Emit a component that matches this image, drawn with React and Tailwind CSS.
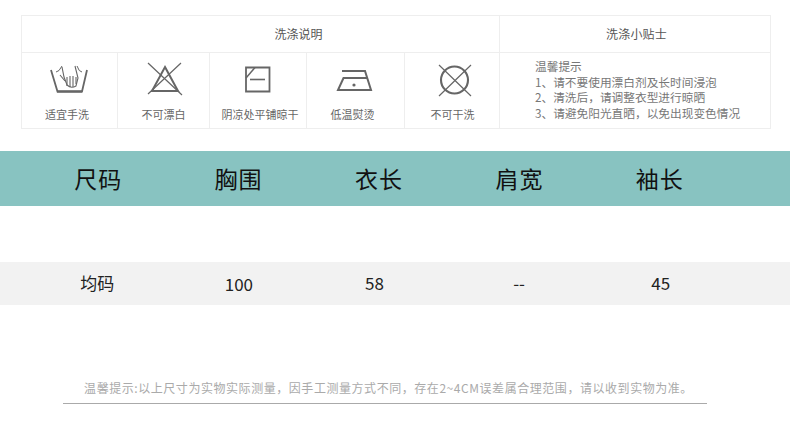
const cols = ['尺码', '胸围', '衣长', '肩宽', '袖长'];
const vals = [
  { text: '均码', cls: 'pb-[2px]' },
  { text: '100', cls: 'pl-[2px]' },
  { text: '58', cls: 'pr-[8px] pb-[2px]' },
  { text: '--', cls: 'pb-[2px]' },
  { text: '45', cls: 'pl-[2px] pb-[2px]' },
];

// svg coordinates below are page pixels, so they read straight off the screenshot
function HandWash() {
  return (
    <svg width="41" height="36" viewBox="49 62 41 36" fill="none" stroke="#666">
      <path d="M51 70 L57.5 91.5 H82 L87 70" strokeWidth="1.8" />
      <path d="M57 91.5 H82" strokeWidth="2.2" />
      <path d="M56 72 Q59 72 62 66 M82 72 Q79 72 77 66" strokeWidth="1" />
      <path d="M62 67 L64 77 L67 85 Q71 89 76 86 L78 78 L75 66" strokeWidth="1.1" />
      <path d="M67 77 V86 M70 76 V87 M73 76 V87 M76 77 V84 M60 75 L65 81" strokeWidth="1.1" />
    </svg>
  );
}

function NoBleach() {
  return (
    <svg width="39" height="36" viewBox="144 62 39 36" fill="none" stroke="#666">
      <path d="M165 67 L178 91 H152 Z" strokeWidth="2" />
      <path d="M148 63 L182 95 M181 63 L148 94" strokeWidth="1.2" />
    </svg>
  );
}

function ShadeDry() {
  return (
    <svg width="30" height="36" viewBox="243 62 30 36" fill="none" stroke="#666">
      <path d="M246 67.5 H269.5 V91.5 H246 Z" strokeWidth="1.8" />
      <path d="M246 78 L255 67.5" strokeWidth="1.5" />
      <path d="M250 79.5 H265" strokeWidth="1.6" />
    </svg>
  );
}

function LowIron() {
  return (
    <svg width="41" height="36" viewBox="335 62 41 36" fill="none" stroke="#666">
      <path d="M342 71 H365 L371 90 H338 L343.5 78 H367" strokeWidth="2" />
      <circle cx="354" cy="85" r="1.6" fill="#666" stroke="none" />
    </svg>
  );
}

function NoDryClean() {
  return (
    <svg width="46" height="36" viewBox="429 62 46 36" fill="none" stroke="#666">
      <circle cx="454.5" cy="80" r="13.5" strokeWidth="2.1" />
      <path d="M439 65 L471 96 M471 65 L439 96" strokeWidth="1.2" />
    </svg>
  );
}

const care = [
  { label: '适宜手洗', w: 'w-[96px]', shift: 'pr-[5px]', Icon: HandWash },
  { label: '不可漂白', w: 'w-[92px]', shift: '', Icon: NoBleach },
  { label: '阴凉处平铺晾干', w: 'w-[97px]', shift: 'pl-[4px]', Icon: ShadeDry },
  { label: '低温熨烫', w: 'w-[98px]', shift: 'pr-[6px]', Icon: LowIron },
  { label: '不可干洗', w: 'w-[94px]', shift: 'pl-[1px]', Icon: NoDryClean },
];

export default function App() {
  return (
    <div className="w-[790px] h-[426px] bg-white overflow-hidden font-['Noto_Sans_CJK_SC','Liberation_Sans',sans-serif]">
      <div className="pt-[15px] pl-[21px]">
        <div className="w-[750px] h-[114px] border border-[#eeeeee] flex text-[#666]">
          <div className="w-[478px] border-r border-[#eeeeee] flex flex-col">
            <div className="h-[37px] pl-[76px] border-b border-[#eeeeee] flex items-center justify-center text-[12px] text-[#555]">洗涤说明</div>
            <div className="flex flex-1">
              {care.map(({ label, w, shift, Icon }, i) => (
                <div key={label} className={`${w} ${i < 4 ? 'border-r border-[#eeeeee]' : ''} flex flex-col items-center`}>
                  <div className="h-[53px] flex items-center justify-center">
                    <Icon />
                  </div>
                  <div className={`${shift} text-[11px] leading-[16px] text-[#666]`}>{label}</div>
                </div>
              ))}
            </div>
          </div>
          <div className="flex-1 flex flex-col">
            <div className="h-[37px] pl-[3px] border-b border-[#eeeeee] flex items-center justify-center text-[12px] tracking-[0.2px] text-[#555]">洗涤小贴士</div>
            <div className="pl-[35px] pt-[5px] text-[11.7px] leading-[15.5px] text-[#777]">
              <div>温馨提示</div>
              <div>1、请不要使用漂白剂及长时间浸泡</div>
              <div>2、清洗后，请调整衣型进行晾晒</div>
              <div>3、请避免阳光直晒，以免出现变色情况</div>
            </div>
          </div>
        </div>
      </div>

      <div className="mt-[22px] h-[55px] bg-[#88c3c1] pl-[28px] pr-[60px] grid grid-cols-5 items-center text-center text-[23px] tracking-[1px] text-[#111]">
        {cols.map((c) => <div key={c}>{c}</div>)}
      </div>

      <div className="mt-[56px] h-[43px] bg-[#f2f2f2] pl-[27px] pr-[60px] grid grid-cols-5 items-center text-center text-[17px] text-[#222]">
        {vals.map((v) => <div key={v.text} className={v.cls}>{v.text}</div>)}
      </div>

      <div className="mt-[73px] mx-[63px] w-[644px] h-[26px] pl-[7px] border-b border-[#aaaaaa] text-center text-[12px] leading-[20px] tracking-[0.55px] text-[#aaa] whitespace-nowrap">
        温馨提示:以上尺寸为实物实际测量，因手工测量方式不同，存在2~4CM误差属合理范围，请以收到实物为准。
      </div>
    </div>
  );
}
